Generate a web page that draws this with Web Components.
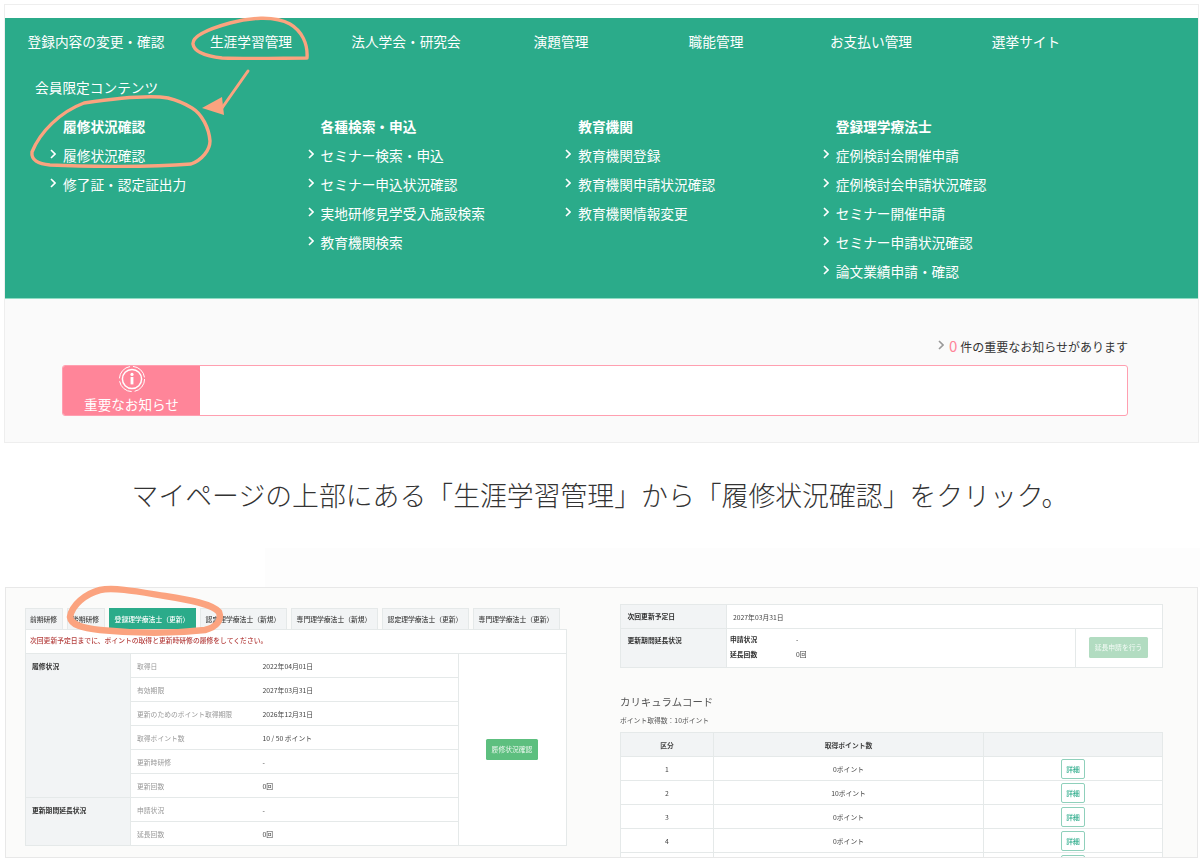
<!DOCTYPE html>
<html lang="ja">
<head>
<meta charset="utf-8">
<title>履修状況確認</title>
<style>
  html, body { margin: 0; background: #fff; }
  body {
    width: 1200px;
    height: 865px;
    overflow: hidden;
    position: relative;
    font-family: "Noto Sans CJK JP", "Noto Sans", sans-serif;
  }
</style>
</head>
<body>
<top-shot>
  <site-menu></site-menu>
  <notice-area count="0"></notice-area>
</top-shot>
<step-caption>マイページの上部にある「生涯学習管理」から「履修状況確認」をクリック。</step-caption>
<bottom-shot>
  <course-panel></course-panel>
  <renewal-panel></renewal-panel>
</bottom-shot>
<note-marks></note-marks>

<script>
const chevron = (color) => `<svg width="6" height="10" viewBox="0 0 6 10"><path d="M1 1l4 4-4 4" fill="none" stroke="${color}" stroke-width="1.6"/></svg>`;

class TopShot extends HTMLElement {
  constructor() {
    super();
    this.attachShadow({ mode: "open" });
    this.shadowRoot.innerHTML = `
      <style>
        :host {
          display: block;
          box-sizing: border-box;
          width: 1195px;
          height: 439px;
          margin: 4px 0 0 4px;
          padding-top: 13px;
          border: 1px solid #eeeeee;
          background: #fff;
        }
      </style>
      <slot></slot>`;
  }
}

const menuData = [
  ["履修状況確認", ["履修状況確認", "修了証・認定証出力"]],
  ["各種検索・申込", ["セミナー検索・申込", "セミナー申込状況確認", "実地研修見学受入施設検索", "教育機関検索"]],
  ["教育機関", ["教育機関登録", "教育機関申請状況確認", "教育機関情報変更"]],
  ["登録理学療法士", ["症例検討会開催申請", "症例検討会申請状況確認", "セミナー開催申請", "セミナー申請状況確認", "論文業績申請・確認"]],
];
const navData = ["登録内容の変更・確認", "生涯学習管理", "法人学会・研究会", "演題管理", "職能管理", "お支払い管理", "選挙サイト"];

class SiteMenu extends HTMLElement {
  constructor() {
    super();
    this.attachShadow({ mode: "open" });
    const cols = menuData.map(([head, items]) => `
      <div class="col">
        <div class="head">${head}</div>
        ${items.map((t) => `<div class="item"><span class="chev">${chevron("#fff")}</span>${t}</div>`).join("")}
      </div>`).join("");
    this.shadowRoot.innerHTML = `
      <style>
        :host {
          display: block;
          box-sizing: border-box;
          height: 281px;
          padding-top: 11px;
          background: #2bab8a;
          border-bottom: 1px solid #8fdcc4;
          color: #fff;
          font-size: 13.7px;
          line-height: 24px;
        }
        .nav {
          display: grid;
          grid-template-columns: repeat(7, 155px);
          padding-left: 13.5px;
          text-align: center;
          white-space: nowrap;
        }
        .members { margin: 22px 0 0 30px; }
        .cols {
          display: grid;
          grid-template-columns: repeat(4, 257.6px);
          margin: 12.5px 0 0 45px;
        }
        .head, .item { height: 29px; line-height: 29px; white-space: nowrap; }
        .head { padding-left: 13px; font-weight: 700; }
        .item { display: flex; align-items: center; }
        .chev { display: flex; width: 13px; margin-top: -3px; }
      </style>
      <div class="nav">${navData.map((t) => `<span>${t}</span>`).join("")}</div>
      <div class="members">会員限定コンテンツ</div>
      <div class="cols">${cols}</div>`;
  }
}

class NoticeArea extends HTMLElement {
  constructor() {
    super();
    this.attachShadow({ mode: "open" });
    this.shadowRoot.innerHTML = `
      <style>
        :host {
          display: block;
          box-sizing: border-box;
          height: 143px;
          padding: 35px 70px 0 57px;
          background: #fafafa;
        }
        .count {
          display: flex;
          justify-content: flex-end;
          align-items: center;
          height: 24px;
          font-size: 12px;
          color: #333;
        }
        .count svg { margin: -2px 5px 0 0; }
        .count b { font-weight: 400; font-size: 15px; color: #ff8599; margin: -2px 3px 0 0; }
        .banner {
          display: flex;
          box-sizing: border-box;
          height: 51px;
          margin-top: 7px;
          border: 1px solid #ff9fb0;
          border-radius: 3px;
          background: #fff;
          overflow: hidden;
        }
        .label {
          display: flex;
          flex-direction: column;
          align-items: center;
          width: 137px;
          background: #ff8599;
          color: #fff;
          font-size: 13.6px;
          line-height: 18px;
        }
        .label svg { display: block; margin-top: -1px; }
        .label span { margin-top: 2px; }
      </style>
      <div class="count">${chevron("#999")}<b>${this.getAttribute("count")}</b>件の重要なお知らせがあります</div>
      <div class="banner">
        <div class="label">
          <svg width="28" height="28" viewBox="0 0 28 28">
            <circle cx="14" cy="14" r="12.6" fill="none" stroke="#fff" stroke-width="1" stroke-dasharray="17 3"/>
            <circle cx="14" cy="14" r="9.6" fill="none" stroke="#fff" stroke-width="1.5"/>
            <circle cx="14" cy="9.4" r="1.6" fill="#fff"/>
            <rect x="12.6" y="12" width="2.8" height="7.4" fill="#fff"/>
          </svg>
          <span>重要なお知らせ</span>
        </div>
      </div>`;
  }
}

class StepCaption extends HTMLElement {
  constructor() {
    super();
    this.attachShadow({ mode: "open" });
    this.shadowRoot.innerHTML = `
      <style>
        :host {
          display: block;
          height: 144px;
          padding-top: 32px;
          box-sizing: border-box;
          color: #333;
        }
        .text {
          text-align: center;
          font-size: 26.85px;
          font-weight: 300;
          line-height: 40px;
          white-space: nowrap;
        }
        .band { height: 39px; margin: 33px 0 0 265px; background: #fdfdfd; }
      </style>
      <div class="text"><slot></slot></div>
      <div class="band"></div>`;
  }
}

class BottomShot extends HTMLElement {
  constructor() {
    super();
    this.attachShadow({ mode: "open" });
    this.shadowRoot.innerHTML = `
      <style>
        :host {
          display: grid;
          grid-template-columns: 542px 543px;
          column-gap: 53.5px;
          align-items: start;
          box-sizing: border-box;
          width: 1193px;
          height: 271px;
          margin-left: 5px;
          padding: 16px 0 0 18.5px;
          background: #fbfbfa;
          border: 1px solid #e8e8e8;
          overflow: hidden;
          font-size: 6.8px;
          color: #444;
          filter: blur(0.35px);
        }
      </style>
      <slot></slot>`;
  }
}

const tableStyle = `
  table { border-collapse: collapse; table-layout: fixed; background: #fff; width: 100%; }
  td, th { border: 1px solid #e5e9e9; padding: 0; font-weight: 400; height: 24px; box-sizing: border-box; white-space: nowrap; }
  .g { background: #f2f4f5; font-weight: 700; color: #333; vertical-align: top; line-height: 24px; padding-left: 6.5px; }
`;

class CoursePanel extends HTMLElement {
  constructor() {
    super();
    this.attachShadow({ mode: "open" });
    const tabs = ["前期研修", "後期研修", "登録理学療法士（更新）", "認定理学療法士（新規）", "専門理学療法士（新規）", "認定理学療法士（更新）", "専門理学療法士（更新）"];
    const rows = [
      ["取得日", "2022年04月01日"],
      ["有効期限", "2027年03月31日"],
      ["更新のためのポイント取得期限", "2026年12月31日"],
      ["取得ポイント数", "10 / 50 ポイント"],
      ["更新時研修", "-"],
      ["更新回数", "0回"],
      ["申請状況", "-"],
      ["延長回数", "0回"],
    ];
    const body = rows.map(([k, v], i) => `
      <tr>
        ${i === 0 ? `<td class="g" rowspan="6">履修状況</td>` : ""}
        ${i === 6 ? `<td class="g" rowspan="2">更新期間延長状況</td>` : ""}
        <td class="k">${k}</td><td class="v">${v}</td>
        ${i === 0 ? `<td class="act" rowspan="8"><span class="btn">履修状況確認</span></td>` : ""}
      </tr>`).join("");
    this.shadowRoot.innerHTML = `
      <style>
        :host { display: block; margin-top: 4px; }
        ${tableStyle}
        .tabs { display: flex; gap: 4px; height: 21px; }
        .tab {
          box-sizing: border-box;
          width: 87px;
          height: 21px;
          line-height: 20px;
          text-align: center;
          background: #f2f4f5;
          border: 1px solid #e5e9e9;
          border-bottom: 0;
          font-weight: 500;
          color: #444;
          white-space: nowrap;
        }
        .tab.short { width: 38px; }
        .tab.on { background: #2bab8a; border-color: #2bab8a; color: #fff; }
        .warn {
          box-sizing: border-box;
          height: 24px;
          line-height: 20px;
          padding-left: 4.5px;
          background: #fff;
          border: 1px solid #e5e9e9;
          border-bottom: 0;
          color: #b5403f;
          font-weight: 500;
        }
        .k { padding-left: 6.5px; color: #999; border-right: 0; }
        .v { padding-left: 6.5px; color: #444; border-left: 0; }
        .act { text-align: center; }
        .btn {
          display: inline-block;
          width: 52px;
          height: 21px;
          line-height: 21px;
          border-radius: 1.5px;
          background: #5dbf7f;
          color: #e8f6ec;
        }
      </style>
      <div class="tabs">${tabs.map((t, i) => `<div class="tab${i < 2 ? " short" : ""}${i === 2 ? " on" : ""}">${t}</div>`).join("")}</div>
      <div class="warn">次回更新予定日までに、ポイントの取得と更新時研修の履修をしてください。</div>
      <table>
        <colgroup><col style="width:105px"><col style="width:126px"><col style="width:202px"><col></colgroup>
        ${body}
      </table>`;
  }
}

class RenewalPanel extends HTMLElement {
  constructor() {
    super();
    this.attachShadow({ mode: "open" });
    const rows = [["1", "0ポイント"], ["2", "10ポイント"], ["3", "0ポイント"], ["4", "0ポイント"], ["", ""]];
    this.shadowRoot.innerHTML = `
      <style>
        :host { display: block; }
        ${tableStyle}
        .g { line-height: 23px; }
        .top { vertical-align: top; }
        .inner { display: grid; grid-template-columns: 66px auto; padding: 3px 0 0 3px; line-height: 14.5px; }
        .inner b { font-weight: 700; color: #333; }
        .apply { text-align: center; vertical-align: top; padding: 8px 1px 0 0; }
        .apply span {
          display: inline-block;
          width: 59px;
          height: 21px;
          line-height: 21px;
          border-radius: 1.5px;
          background: #b2dcc1;
          color: #f2faf5;
        }
        h2 {
          margin: 24px 0 0;
          font-size: 10.4px;
          line-height: 20px;
          font-weight: 400;
          color: #555;
        }
        p { margin: 0 0 4px; line-height: 16px; color: #555; }
        .codes { text-align: center; }
        .codes th { font-weight: 700; color: #444; background: #f2f4f5; }
        .codes td { height: 24px; }
        .detail {
          display: block;
          box-sizing: border-box;
          width: 24px;
          height: 20px;
          margin: 0 auto;
          line-height: 18px;
          border: 1px solid #8fd0bb;
          border-radius: 2px;
          background: #fff;
          color: #2bab8a;
          font-weight: 500;
        }
      </style>
      <table>
        <colgroup><col style="width:106px"><col style="width:349px"><col></colgroup>
        <tr>
          <td class="g">次回更新予定日</td>
          <td colspan="2" style="padding-left:6px">2027年03月31日</td>
        </tr>
        <tr>
          <td class="g" style="height:39px">更新期間延長状況</td>
          <td class="top"><div class="inner"><b>申請状況</b><span>-</span><b>延長回数</b><span>0回</span></div></td>
          <td class="apply"><span>延長申請を行う</span></td>
        </tr>
      </table>
      <h2>カリキュラムコード</h2>
      <p>ポイント取得数：10ポイント</p>
      <table class="codes">
        <colgroup><col style="width:93px"><col style="width:270px"><col></colgroup>
        <tr><th>区分</th><th>取得ポイント数</th><th></th></tr>
        ${rows.map(([a, b]) => `<tr><td>${a}</td><td>${b}</td><td><span class="detail">${a ? "詳細" : ""}</span></td></tr>`).join("")}
      </table>`;
  }
}

// hand drawn orange marks that sit over both screenshots
class NoteMarks extends HTMLElement {
  constructor() {
    super();
    this.attachShadow({ mode: "open" });
    this.shadowRoot.innerHTML = `
      <style>
        :host { position: absolute; left: 0; top: 0; width: 1200px; height: 865px; pointer-events: none; }
        svg { display: block; }
        path { fill: none; stroke: #fba37f; stroke-linecap: round; stroke-linejoin: round; }
      </style>
      <svg width="1200" height="865" viewBox="0 0 1200 865">
        <path stroke-width="3.4" d="M307 58C308 44 302 31 290 24C274 15 248 18 230 23C212 28 192 35 193 44C194 52 205 56 222 58C250 59 285 58 307 58"/>
        <path stroke-width="3" d="M248 71L222 108"/>
        <path d="M202 108L222 97L224 115Z" style="fill:#fba37f;stroke:none"/>
        <path stroke-width="3.4" d="M168 98C150 95 118 98 84 103C60 112 40 132 32 152C31 160 38 164 50 165C90 167 150 167 191 164C202 160 210 150 210 141C209 128 202 114 192 108C184 103 176 100 168 98"/>
        <path stroke-width="6.5" d="M100 590C85 594 72 605 70 617C71 625 82 628 100 630C130 633 170 634 205 630C217 627 222 620 219 612C212 604 190 600 165 596C140 592 115 587 100 590"/>
      </svg>`;
  }
}

customElements.define("top-shot", TopShot);
customElements.define("site-menu", SiteMenu);
customElements.define("notice-area", NoticeArea);
customElements.define("step-caption", StepCaption);
customElements.define("bottom-shot", BottomShot);
customElements.define("course-panel", CoursePanel);
customElements.define("renewal-panel", RenewalPanel);
customElements.define("note-marks", NoteMarks);
</script>
</body>
</html>
